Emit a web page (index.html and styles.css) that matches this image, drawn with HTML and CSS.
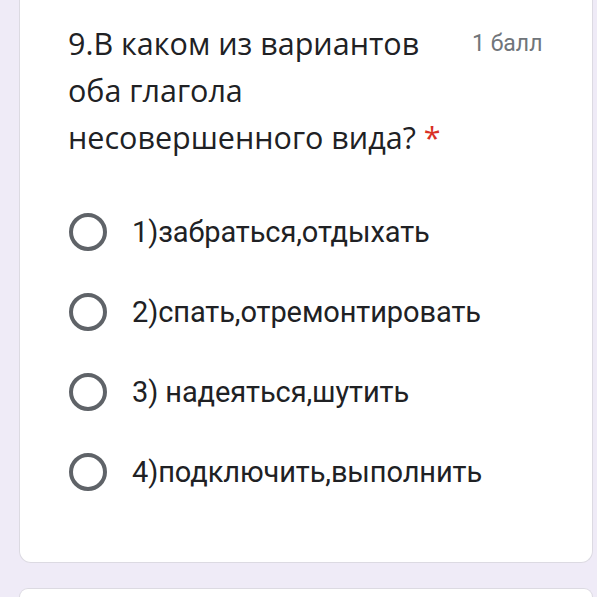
FILE: index.html
```html
<!DOCTYPE html>
<html lang="ru">
<head>
<meta charset="utf-8">
<link rel="stylesheet" href="styles.css">
</head>
<body>
<div class="card">
  <div class="header">
    <div class="title">9.В каком из вариантов оба глагола несовершенного вида? <span class="req">*</span></div>
    <div class="points">1 балл</div>
  </div>
  <div class="options">
    <div class="option"><span class="radio"></span><span class="label">1)забраться,отдыхать</span></div>
    <div class="option"><span class="radio"></span><span class="label">2)спать,отремонтировать</span></div>
    <div class="option"><span class="radio"></span><span class="label">3) надеяться,шутить</span></div>
    <div class="option"><span class="radio"></span><span class="label">4)подключить,выполнить</span></div>
  </div>
</div>
<div class="card next"></div>
</body>
</html>
```
FILE: styles.css
```css
html, body {
  margin: 0;
  padding: 0;
}
body {
  background: #efebf7;
  width: 597px;
  height: 597px;
  overflow: hidden;
  font-family: Roboto, "Noto Sans", sans-serif;
}
.card {
  background: #ffffff;
  margin-left: 19px;
  width: 574px;
  height: 563px;
  border: 1px solid #dcdae2;
  border-top: none;
  border-radius: 0 0 12px 12px;
  padding: 20px 0 0 48px;
  box-sizing: border-box;
}
.card.next {
  margin-top: 25px;
  border-top: 1px solid #dcdae2;
  border-bottom: none;
  border-radius: 12px 12px 0 0;
  height: 9px;
  padding: 0;
}
.header {
  display: flex;
  align-items: flex-start;
}
.title {
  width: 395px;
  font-family: "Open Sans", sans-serif;
  font-size: 30.5px;
  line-height: 47px;
  color: #202124;
}
.req {
  color: #d93025;
}
.points {
  margin-left: 9px;
  font-size: 23px;
  line-height: 47px;
  color: #70757a;
}
.options {
  margin-top: 52px;
  display: flex;
  flex-direction: column;
  gap: 42px;
}
.option {
  display: flex;
  align-items: center;
  height: 38px;
}
.radio {
  width: 38px;
  height: 38px;
  box-sizing: border-box;
  border: 4px solid #5f6368;
  border-radius: 50%;
  margin-left: 1px;
  flex: none;
}
.label {
  margin-left: 25px;
  font-size: 29px;
  letter-spacing: -0.1px;
  color: #202124;
}
```
